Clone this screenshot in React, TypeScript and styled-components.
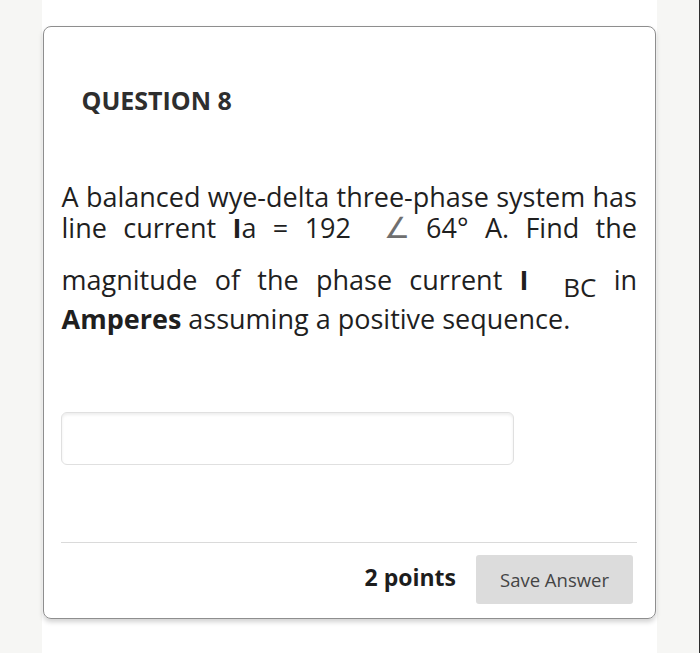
import React from "react";
import styled, { createGlobalStyle } from "styled-components";

const Global = createGlobalStyle`
  html, body { margin: 0; padding: 0; background: #ffffff; }
  body { font-family: "Open Sans", "Noto Sans", sans-serif; color: #222; }
`;

const Shell = styled.div`
  background: #f6f6f4;
  height: 653px;
  width: 700px;
  box-sizing: border-box;
  border-right: 1px solid #2e2e2e;
  display: flex;
  justify-content: flex-start;
`;

const Column = styled.main`
  margin-left: 42px;
  width: 615px;
  height: 655px;
  background: #ffffff;
  padding: 26px 1px 0 1px;
  box-sizing: border-box;
`;

const Card = styled.section`
  border: 1.5px solid #8e8e8e;
  border-radius: 8px;
  height: 593px;
  box-sizing: border-box;
  box-shadow: 0 3px 5px rgba(0, 0, 0, 0.18);
  padding: 58px 18px 0 17.5px;
  display: flex;
  flex-direction: column;
`;

const Title = styled.h2`
  margin: 0 0 0 20px;
  font-size: 25px;
  font-weight: 700;
  line-height: 30px;
  color: #2e2e2e;
`;

const Body = styled.p`
  margin: 66px 0 0 0;
  font-size: 27px;
  line-height: 31px;
  text-align: justify;
  color: #1f1f1f;
`;

const Strong = styled.b`
  font-weight: 700;
`;

const TallStrong = styled.b`
  font-weight: 700;
  display: inline-block;
  padding-top: 20px;
`;

const Angle = styled.span`
  font-family: "DejaVu Sans", sans-serif;
  font-weight: 300;
  color: #6f6f6f;
  font-size: 29px;
`;

const Sub = styled.span`
  vertical-align: -7px;
  font-size: 26px;
`;

const AnswerInput = styled.input`
  margin: 78px 0 0 -1px;
  width: 453px;
  height: 53px;
  box-sizing: border-box;
  border: 1.5px solid #e0e0e0;
  border-radius: 6px;
  box-shadow: inset 0 2px 3px rgba(0, 0, 0, 0.07);
  background: #fff;
  outline: none;
`;

const Divider = styled.hr`
  margin: 77px 0 0 -1px;
  border: none;
  border-top: 1.5px solid #dadada;
  height: 0;
`;

const Footer = styled.div`
  margin-top: 12px;
  display: flex;
  justify-content: flex-end;
  align-items: center;
  gap: 20px;
  padding-right: 4px;
`;

const Points = styled.span`
  font-size: 23px;
  font-weight: 700;
  color: #1d1d1d;
  margin-bottom: 6px;
`;

const SaveButton = styled.button`
  width: 157px;
  height: 49px;
  border: none;
  border-radius: 3px;
  background: #dcdcdc;
  font-family: "Open Sans", sans-serif;
  font-size: 18.5px;
  color: #444;
  padding: 0;
`;

export default function App() {
  return (
    <>
      <Global />
      <Shell>
        <Column>
          <Card>
            <Title>QUESTION 8</Title>
            <Body>
              A balanced wye-delta three-phase system has line current <Strong>I</Strong>a = 192{"\u00a0 "}
              <Angle>∠</Angle> 64° A. Find the magnitude of the phase current <TallStrong>I</TallStrong>
              {"\u00a0 "}
              <Sub>BC</Sub> in <Strong>Amperes</Strong> assuming a positive sequence.
            </Body>
            <AnswerInput type="text" aria-label="Answer" />
            <Divider />
            <Footer>
              <Points>2 points</Points>
              <SaveButton>Save Answer</SaveButton>
            </Footer>
          </Card>
        </Column>
      </Shell>
    </>
  );
}
